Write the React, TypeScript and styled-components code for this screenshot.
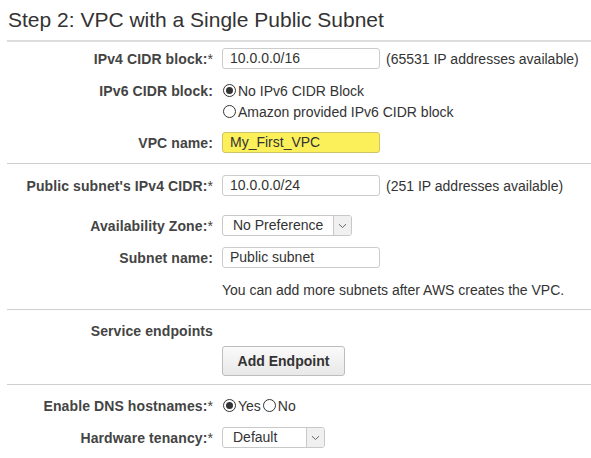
import React from "react";
import styled, { createGlobalStyle } from "styled-components";

const Global = createGlobalStyle`
  html, body { margin: 0; padding: 0; background: #fff; }
  body { font-family: "Liberation Sans", Arial, sans-serif; color: #333; }
`;

const Page = styled.div`
  padding: 8px 0 0 7px;
  width: 584px;
`;

const Title = styled.h2`
  margin: 0 0 8px 1px;
  font-size: 21px;
  line-height: 24px;
  font-weight: normal;
  color: #333;
`;

const Section = styled.div<{ $pt: number; $pb: number; $thick?: boolean }>`
  border-top: ${(p) => (p.$thick ? "2px solid #dcdcdc" : "1px solid #cfcfcf")};
  padding: ${(p) => p.$pt}px 0 ${(p) => p.$pb}px 0;
  display: flex;
  flex-direction: column;
`;

const Row = styled.div<{ $mt?: number; $h?: number }>`
  display: grid;
  grid-template-columns: 206px 1fr;
  column-gap: 9px;
  align-items: center;
  height: ${(p) => p.$h ?? 21}px;
  margin-top: ${(p) => p.$mt ?? 0}px;
`;

const Label = styled.div`
  text-align: right;
  font-size: 14px;
  font-weight: bold;
  letter-spacing: 0.1px;
  color: #444;
  white-space: nowrap;
`;

const Star = styled.span`
  font-weight: normal;
`;

const Field = styled.div`
  display: flex;
  align-items: center;
  font-size: 14px;
  color: #333;
  white-space: nowrap;
`;

const TextInput = styled.div<{ $highlight?: boolean }>`
  box-sizing: border-box;
  width: 158px;
  height: 21px;
  border: 1px solid ${(p) => (p.$highlight ? "#cfc468" : "#cccccc")};
  border-radius: 3px;
  background: ${(p) => (p.$highlight ? "#fbf05a" : "#fff")};
  padding: 0 7px;
  font-size: 14px;
  line-height: 19px;
  color: #333;
`;

const Hint = styled.span`
  margin-left: 6px;
  font-size: 14px;
  color: #333;
`;

const SelectBox = styled.div<{ $w: number }>`
  box-sizing: border-box;
  width: ${(p) => p.$w}px;
  height: 21px;
  border: 1px solid #c8c8c8;
  border-radius: 3px;
  display: flex;
  align-items: stretch;
  background: #fff;
  overflow: hidden;
`;

const SelectText = styled.div`
  flex: 1;
  padding-left: 10px;
  font-size: 14px;
  line-height: 19px;
  color: #333;
`;

const SelectArrow = styled.div`
  width: 17px;
  border-left: 1px solid #c8c8c8;
  background: #f0f0f0;
  display: flex;
  align-items: center;
  justify-content: center;
`;

const RadioCircle = styled.span<{ $on?: boolean }>`
  box-sizing: border-box;
  width: 13px;
  height: 13px;
  border-radius: 50%;
  border: 1px solid #333;
  background: #fff;
  display: inline-flex;
  align-items: center;
  justify-content: center;
  margin: 0 2px 0 1px;
  flex: none;
  &::after {
    content: "";
    width: 7px;
    height: 7px;
    border-radius: 50%;
    background: ${(p) => (p.$on ? "#333" : "transparent")};
  }
`;

const RadioLabel = styled.span`
  font-size: 14px;
  color: #333;
  margin-right: 1px;
`;

const Button = styled.div`
  box-sizing: border-box;
  width: 123px;
  height: 30px;
  border: 1px solid #bdbdbd;
  border-radius: 3px;
  background: linear-gradient(#fafafa, #e8e8e8);
  font-size: 14px;
  font-weight: bold;
  color: #333;
  display: flex;
  align-items: center;
  justify-content: center;
`;

const Chevron = () => (
  <svg width="9" height="6" viewBox="0 0 9 6">
    <path d="M1 1.2 L4.5 4.5 L8 1.2" fill="none" stroke="#666" strokeWidth="1" />
  </svg>
);

const Select = ({ value, width }: { value: string; width: number }) => (
  <SelectBox $w={width}>
    <SelectText>{value}</SelectText>
    <SelectArrow>
      <Chevron />
    </SelectArrow>
  </SelectBox>
);

const Radio = ({ on, label }: { on?: boolean; label: string }) => (
  <>
    <RadioCircle $on={on} />
    <RadioLabel>{label}</RadioLabel>
  </>
);

export default function App() {
  return (
    <>
      <Global />
      <Page>
        <Title>Step 2: VPC with a Single Public Subnet</Title>

        <Section $pt={6} $pb={10} $thick>
          <Row>
            <Label>
              IPv4 CIDR block:<Star>*</Star>
            </Label>
            <Field>
              <TextInput>10.0.0.0/16</TextInput>
              <Hint>(65531 IP addresses available)</Hint>
            </Field>
          </Row>
          <Row $mt={11}>
            <Label>IPv6 CIDR block:</Label>
            <Field>
              <Radio on label="No IPv6 CIDR Block" />
            </Field>
          </Row>
          <Row>
            <Label />
            <Field>
              <Radio label="Amazon provided IPv6 CIDR block" />
            </Field>
          </Row>
          <Row $mt={10}>
            <Label>VPC name:</Label>
            <Field>
              <TextInput $highlight>My_First_VPC</TextInput>
            </Field>
          </Row>
        </Section>

        <Section $pt={11} $pb={9}>
          <Row>
            <Label>
              Public subnet's IPv4 CIDR:<Star>*</Star>
            </Label>
            <Field>
              <TextInput>10.0.0.0/24</TextInput>
              <Hint>(251 IP addresses available)</Hint>
            </Field>
          </Row>
          <Row $mt={19}>
            <Label>
              Availability Zone:<Star>*</Star>
            </Label>
            <Field>
              <Select value="No Preference" width={130} />
            </Field>
          </Row>
          <Row $mt={11}>
            <Label>Subnet name:</Label>
            <Field>
              <TextInput>Public subnet</TextInput>
            </Field>
          </Row>
          <Row $mt={11}>
            <Label />
            <Field>You can add more subnets after AWS creates the VPC.</Field>
          </Row>
        </Section>

        <Section $pt={10} $pb={8}>
          <Row>
            <Label>Service endpoints</Label>
            <Field />
          </Row>
          <Row $mt={5} $h={30}>
            <Label />
            <Field>
              <Button>Add Endpoint</Button>
            </Field>
          </Row>
        </Section>

        <Section $pt={10} $pb={10}>
          <Row>
            <Label>
              Enable DNS hostnames:<Star>*</Star>
            </Label>
            <Field>
              <Radio on label="Yes" />
              <Radio label="No" />
            </Field>
          </Row>
          <Row $mt={11}>
            <Label>
              Hardware tenancy:<Star>*</Star>
            </Label>
            <Field>
              <Select value="Default" width={103} />
            </Field>
          </Row>
        </Section>
      </Page>
    </>
  );
}
